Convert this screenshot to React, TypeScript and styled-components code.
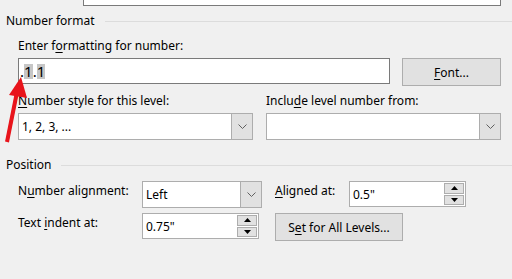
import React from 'react';
import styled, {createGlobalStyle} from 'styled-components';

const GlobalStyle = createGlobalStyle`
    html, body {
        margin: 0;
        padding: 0;
        background: #f0f0f0;
    }
`;

const Page = styled.div`
    position: relative;
    width: 512px;
    height: 279px;
    overflow: hidden;
    background: #f0f0f0;
    font-family: "Noto Sans", "Open Sans", sans-serif;
    font-size: 12px;
    color: #000;
`;

const TopBox = styled.div`
    margin-left: 83px;
    width: 416px;
    height: 5px;
    background: #fff;
    border: 1px solid #7a7a7a;
    border-top: none;
`;

const GroupHeader = styled.div<{ $top: number }>`
    display: flex;
    align-items: center;
    gap: 10px;
    margin-top: ${p => p.$top}px;
    padding-left: 6px;
    height: 16px;
    line-height: 16px;

    &::after {
        content: '';
        flex: 1;
        height: 1px;
        background: #dcdcdc;
    }
`;

const Section = styled.div`
    padding-left: 18px;
`;

const Label = styled.div<{ $top?: number; $width?: number }>`
    height: 16px;
    line-height: 16px;
    white-space: nowrap;
    margin-top: ${p => p.$top ?? 0}px;
    ${p => p.$width ? `width: ${p.$width}px; padding-top: 2px; flex: none;` : ''}
`;

const Row = styled.div<{ $top: number }>`
    display: flex;
    align-items: flex-start;
    margin-top: ${p => p.$top}px;
`;

const Column = styled.div<{ $width: number; $gap?: number }>`
    width: ${p => p.$width}px;
    margin-right: ${p => p.$gap ?? 0}px;
`;

const TextInput = styled.div`
    box-sizing: border-box;
    width: 372px;
    height: 26px;
    background: #fff;
    border: 1px solid #7a7a7a;
    padding-left: 1px;
    display: flex;
    align-items: center;
    font-size: 15px;
`;

const Mark = styled.span`
    background: #c6c6c6;
    line-height: 15px;
`;

const Button = styled.div<{ $width: number; $left: number }>`
    box-sizing: border-box;
    width: ${p => p.$width}px;
    height: 28px;
    margin-left: ${p => p.$left}px;
    background: #e1e1e1;
    border: 1px solid #adadad;
    display: flex;
    align-items: center;
    justify-content: center;
    flex: none;
`;

const Select = styled.div<{ $width: number; $height?: number }>`
    box-sizing: border-box;
    width: ${p => p.$width}px;
    height: ${p => p.$height ?? 27}px;
    background: #fff;
    border: 1px solid #adadad;
    display: flex;
    flex: none;
`;

const Value = styled.div`
    flex: 1;
    display: flex;
    align-items: center;
    padding-left: 3px;
`;

const DropButton = styled.div`
    width: 20px;
    background: #e1e1e1;
    border-left: 1px solid #adadad;
    display: flex;
    align-items: center;
    justify-content: center;
`;

const SpinButtons = styled.div`
    width: 20px;
    display: flex;
    flex-direction: column;
    gap: 1px;
    padding: 1px 1px 1px 0;
`;

const SpinButton = styled.div`
    flex: 1;
    background: #e1e1e1;
    border: 1px solid #adadad;
    display: flex;
    align-items: center;
    justify-content: center;
`;

const Underline = styled.span`
    text-decoration: underline;
    text-underline-offset: 2px;
`;

const Arrow = styled.svg`
    position: absolute;
    left: 0;
    top: 70px;
`;

const Chevron = () => (
    <svg width="9" height="5" viewBox="0 0 9 5">
        <path d="M0.5 0.5 L4.5 4.5 L8.5 0.5" fill="none" stroke="#606060" strokeWidth="1"/>
    </svg>
);

const Triangle = ({up}: { up: boolean }) => (
    <svg width="7" height="4" viewBox="0 0 7 4">
        <path d={up ? 'M0 4 L3.5 0 L7 4 Z' : 'M0 0 L3.5 4 L7 0 Z'} fill="#000"/>
    </svg>
);

const Combo = ({width, value}: { width: number; value?: string }) => (
    <Select $width={width}>
        <Value>{value}</Value>
        <DropButton><Chevron/></DropButton>
    </Select>
);

const Spin = ({width, value}: { width: number; value: string }) => (
    <Select $width={width} $height={26}>
        <Value>{value}</Value>
        <SpinButtons>
            <SpinButton><Triangle up/></SpinButton>
            <SpinButton><Triangle up={false}/></SpinButton>
        </SpinButtons>
    </Select>
);

function App() {
    return (
        <Page>
            <GlobalStyle/>
            <TopBox/>
            <GroupHeader $top={7}>Number format</GroupHeader>
            <Section>
                <Label $top={9}>Enter f<Underline>o</Underline>rmatting for number:</Label>
                <Row $top={4}>
                    <TextInput>.<Mark>1</Mark>.<Mark>1</Mark></TextInput>
                    <Button $width={99} $left={12}><Underline>F</Underline>ont...</Button>
                </Row>
                <Row $top={7}>
                    <Column $width={235} $gap={13}>
                        <Label><Underline>N</Underline>umber style for this level:</Label>
                        <Row $top={4}><Combo width={235} value="1, 2, 3, ..."/></Row>
                    </Column>
                    <Column $width={235}>
                        <Label>Inclu<Underline>d</Underline>e level number from:</Label>
                        <Row $top={4}><Combo width={235}/></Row>
                    </Column>
                </Row>
            </Section>
            <GroupHeader $top={17}>Position</GroupHeader>
            <Section>
                <Row $top={8}>
                    <Label $width={124}>N<Underline>u</Underline>mber alignment:</Label>
                    <Combo width={120} value="Left"/>
                    <Label $width={74} style={{marginLeft: 13}}><Underline>A</Underline>ligned at:</Label>
                    <Spin width={117} value={'0.5"'}/>
                </Row>
                <Row $top={5}>
                    <Label $width={124}>Text <Underline>i</Underline>ndent at:</Label>
                    <Spin width={117} value={'0.75"'}/>
                    <Button $width={128} $left={16}>S<Underline>e</Underline>t for All Levels...</Button>
                </Row>
            </Section>
            <Arrow width="30" height="75" viewBox="0 70 30 75">
                <line x1="7" y1="142" x2="17" y2="92" stroke="#e8141b" strokeWidth="4"/>
                <polygon points="21,77 27,98 9,95" fill="#e8141b"/>
            </Arrow>
        </Page>
    );
}

export default App;
